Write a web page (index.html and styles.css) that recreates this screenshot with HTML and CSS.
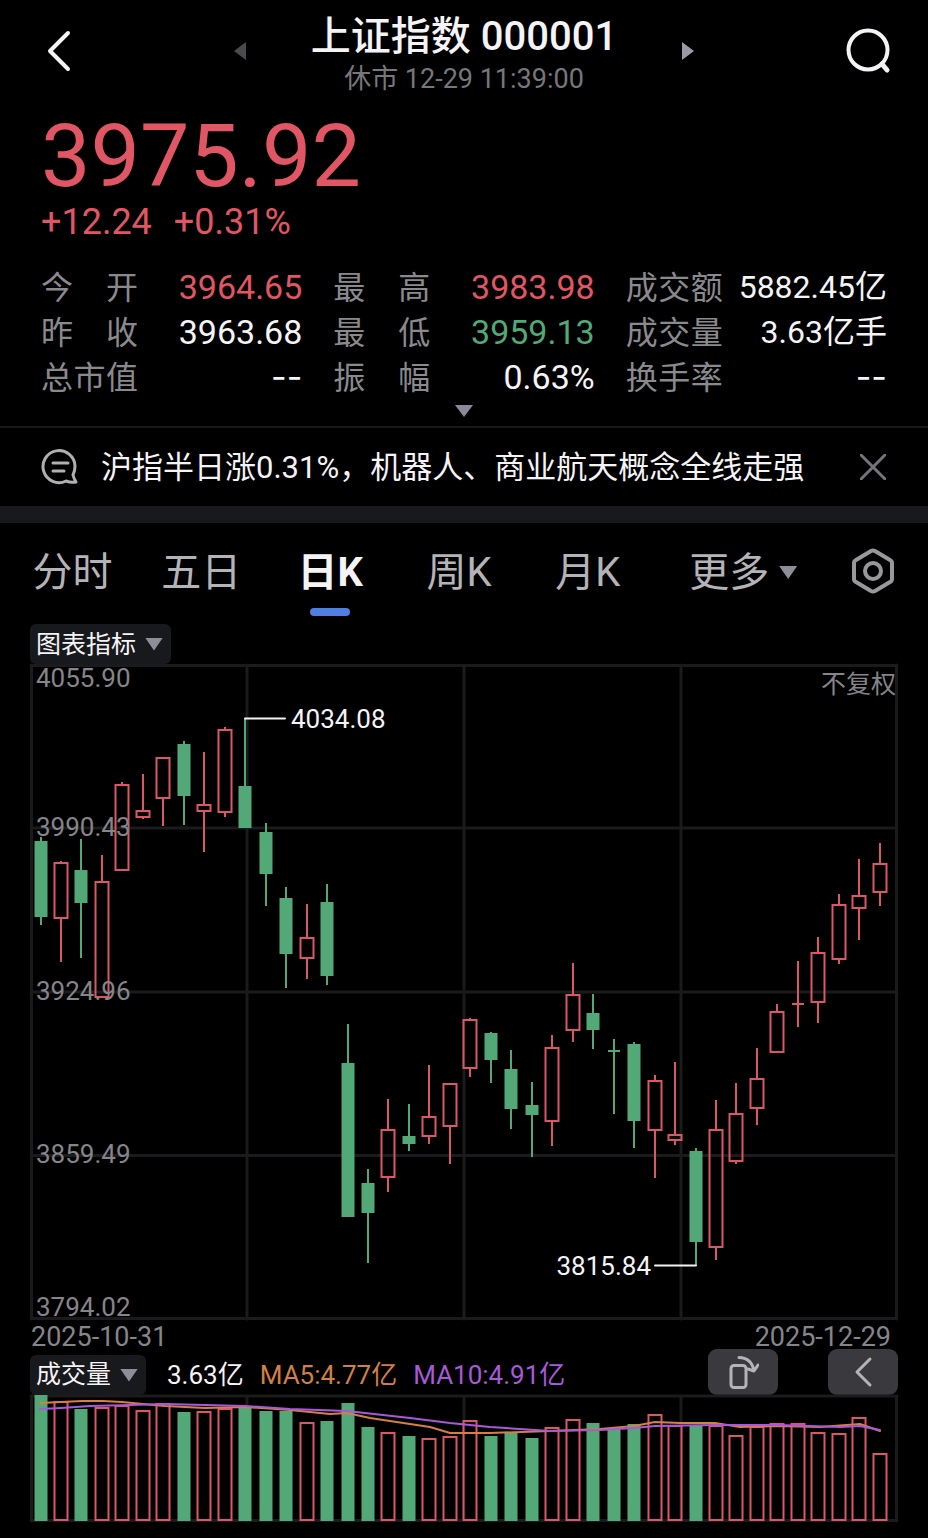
FILE: index.html
```
<!DOCTYPE html>
<html lang="zh-CN">

<head>
    <meta charset="utf-8" />
    <meta name="viewport" content="width=device-width, initial-scale=1">
    <title>上证指数 000001</title>
    <link rel="stylesheet" href="styles.css">
</head>

<body>
    <header class="topbar">
        <button class="icon-btn back" aria-label="返回">
            <svg width="26" height="42" viewBox="0 0 26 42"><path d="M22 3 4 21l18 18" /></svg>
        </button>
        <div class="heading">
            <button class="icon-btn prev" aria-label="上一个">
                <svg width="12" height="18" viewBox="0 0 12 18"><path d="M12 0v18L0 9z" /></svg>
            </button>
            <div class="name">
                <h1>上证指数 000001</h1>
                <p>休市 12-29 11:39:00</p>
            </div>
            <button class="icon-btn next" aria-label="下一个">
                <svg width="12" height="18" viewBox="0 0 12 18"><path d="M0 0v18l12-9z" /></svg>
            </button>
        </div>
        <button class="icon-btn search" aria-label="搜索">
            <svg width="46" height="46" viewBox="0 0 46 46">
                <circle cx="22" cy="22" r="19.5" />
                <path d="m36 36 5 6" stroke-width="5" />
            </svg>
        </button>
    </header>

    <section class="quote">
        <div class="price">3975.92</div>
        <div class="change"><span>+12.24</span><span>+0.31%</span></div>
        <div class="stats">
            <dl>
                <dt>今 开</dt><dd class="up">3964.65</dd>
                <dt>昨 收</dt><dd>3963.68</dd>
                <dt>总市值</dt><dd class="none">--</dd>
            </dl>
            <dl>
                <dt>最 高</dt><dd class="up">3983.98</dd>
                <dt>最 低</dt><dd class="down">3959.13</dd>
                <dt>振 幅</dt><dd>0.63%</dd>
            </dl>
            <dl>
                <dt>成交额</dt><dd class="unit">5882.45亿</dd>
                <dt>成交量</dt><dd class="unit">3.63亿手</dd>
                <dt>换手率</dt><dd class="none">--</dd>
            </dl>
        </div>
        <button class="icon-btn unfold" aria-label="展开">
            <svg width="18" height="12" viewBox="0 0 18 12"><path d="M0 0h18L9 12z" /></svg>
        </button>
    </section>

    <section class="news">
        <svg class="news-icon" width="38" height="38" viewBox="0 0 38 38">
            <path d="M34 18A16 16 0 1 0 25 33q5 2 10 1-2-3-3-7 2-4 2-9z" />
            <path d="M12 15h15M12 23h11" />
        </svg>
        <a href="#">沪指半日涨0.31%，机器人、商业航天概念全线走强</a>
        <button class="icon-btn close" aria-label="关闭">
            <svg width="26" height="26" viewBox="0 0 26 26"><path d="m1 1 24 24M25 1 1 25" /></svg>
        </button>
    </section>

    <nav class="tabs">
        <button>分时</button>
        <button>五日</button>
        <button class="active">日K</button>
        <button>周K</button>
        <button>月K</button>
        <button>更多<i class="caret"></i></button>
        <button class="setting" aria-label="设置">
            <svg width="44" height="46" viewBox="0 0 44 46">
                <path d="M20 3q2-1 4 0l15 9q2 1 2 3v16q0 2-2 3l-15 9q-2 1-4 0L5 34q-2-1-2-3V15q0-2 2-3z" />
                <circle cx="22" cy="23" r="8" />
            </svg>
        </button>
    </nav>

    <main class="charts">
        <label class="chip">
            <select aria-label="图表指标">
                <option>图表指标</option>
            </select>
            <i class="caret"></i>
        </label>
        <svg id="kline" class="plot" viewBox="30 664 868 656">
            <g class="grid">
                <path d="M31 665.5h866M31 828h866M31 992h866M31 1155.5h866M31 1318.5h866" />
                <path d="M31.5 665v654M247 665v654M464 665v654M681 665v654M896.5 665v654" />
            </g>
            <g class="candles"></g>
            <g class="scale">
                <text x="36" y="687">4055.90</text>
                <text x="36" y="836">3990.43</text>
                <text x="36" y="1000">3924.96</text>
                <text x="36" y="1163">3859.49</text>
                <text x="36" y="1316">3794.02</text>
                <text x="896" y="693" class="right">不复权</text>
            </g>
            <g class="mark">
                <path d="M245 718.5h40M655 1265.5h41" />
                <text x="291" y="728">4034.08</text>
                <text x="651" y="1275" class="right">3815.84</text>
            </g>
        </svg>
        <div class="dates"><span>2025-10-31</span><span>2025-12-29</span></div>
        <div class="legend">
            <label class="chip">
                <select aria-label="成交量">
                    <option>成交量</option>
                </select>
                <i class="caret"></i>
            </label>
            <span>3.63亿</span>
            <span class="ma5">MA5:4.77亿</span>
            <span class="ma10">MA10:4.91亿</span>
            <div class="tools">
                <button aria-label="横屏">
                    <svg width="32" height="36" viewBox="0 0 32 36">
                        <rect x="4" y="11.5" width="15" height="22" rx="3" />
                        <path d="M12 3.500q12 0 15 13M21 15l6 2 4-6" />
                    </svg>
                </button>
                <button aria-label="收起">
                    <svg width="20" height="32" viewBox="0 0 20 32"><path d="M17 3 4 16l13 13" /></svg>
                </button>
            </div>
        </div>
        <svg id="volume" class="plot" viewBox="30 1395 868 127">
            <g class="grid">
                <path d="M31 1396h866M31 1520.5h866" />
                <path d="M31.5 1396v125M247 1396v125M464 1396v125M681 1396v125M896.5 1396v125" />
            </g>
            <g class="bars"></g>
            <polyline class="ma5" points="40,1403 61,1402 82,1401 103,1401 122,1402 143,1404 165,1406 205,1408 245,1407 290,1410 330,1414 347,1413 370,1418 430,1427 450,1433 490,1433 550,1431 600,1429 634,1426 655,1422 680,1423 715,1423 740,1427 778,1426 820,1427 860,1424 880,1431" />
            <polyline class="ma10" points="40,1409 61,1408 90,1406 130,1405 165,1404 205,1405 245,1406 290,1409 347,1411 410,1418 450,1423 490,1427 550,1431 600,1430 634,1428 655,1426 715,1425 778,1425 840,1427 860,1426 880,1430" />
        </svg>
    </main>
    <script src="chart.js"></script>
</body>

</html>
```

FILE: styles.css
```
* {
    box-sizing: border-box;
    margin: 0;
    padding: 0;
}

body {
    background: #000;
    color: #f4f4f6;
    font-family: Roboto, "Noto Sans CJK SC", sans-serif;
    font-size: 26px;
    line-height: 1;
}

button,
select {
    border: 0;
    background: none;
    color: inherit;
    font: inherit;
    cursor: pointer;
}

svg {
    display: block;
    fill: none;
    stroke-linecap: round;
    stroke-linejoin: round;
}

.up {
    color: #e15665;
}

.down {
    color: #52a977;
}

.caret {
    width: 18px;
    height: 13px;
    background: #8e8e98;
    clip-path: polygon(0 0, 100% 0, 50% 100%);
}

/* top bar */

.topbar {
    display: flex;
    align-items: center;
    justify-content: space-between;
    height: 102px;
    padding: 0 36px 0 46px;
}

.back svg {
    stroke: #f4f4f6;
    stroke-width: 4;
}

.search svg {
    stroke: #f4f4f6;
    stroke-width: 4;
}

.heading {
    display: flex;
    align-items: center;
    justify-content: space-between;
    width: 460px;
    margin-left: 10px;
}

.name {
    padding-top: 6px;
    text-align: center;
}

.name h1 {
    font-size: 40px;
    font-weight: 500;
    line-height: 50px;
}

.name p {
    color: #77777b;
    font-size: 27px;
    line-height: 34px;
}

.prev svg {
    fill: #4a4a4c;
}

.next svg {
    fill: #9a9aa4;
}

/* quote */

.quote {
    padding: 10px 41px 0;
    border-bottom: 2px solid #18181a;
}

.price {
    color: #e15665;
    font-size: 88px;
    line-height: 88px;
}

.change {
    display: flex;
    gap: 22px;
    color: #e15665;
    font-size: 36px;
    line-height: 44px;
}

.stats {
    display: grid;
    grid-template-columns: repeat(3, 1fr);
    gap: 31px;
    margin-top: 20px;
}

.stats dl {
    display: grid;
    grid-template-columns: 97px 1fr;
    line-height: 46px;
}

.stats dt {
    height: 45px;
    color: #8a8a8e;
    font-size: 32px;
    line-height: 48px;
    text-align-last: justify;
}

.stats dd {
    height: 45px;
    font-size: 34px;
    text-align: right;
    white-space: nowrap;
}

.stats .unit {
    font-size: 32px;
}

.stats .none {
    font-family: Inter, sans-serif;
}

.unfold {
    display: block;
    margin: 6px auto 9px;
}

.unfold svg {
    fill: #8a8a98;
}

/* news */

.news {
    display: flex;
    align-items: center;
    height: 95px;
    padding: 0 42px 0 41px;
    border-bottom: 17px solid #18191d;
}

.news a {
    flex: 1;
    margin-left: 22px;
    color: inherit;
    font-size: 31px;
    text-decoration: none;
    white-space: nowrap;
}

.news-icon {
    stroke: #b0b0b2;
    stroke-width: 3;
}

.close svg {
    stroke: #74747c;
    stroke-width: 3;
}

/* tabs */

.tabs {
    display: grid;
    grid-template-columns: repeat(5, 129fr) 182fr 78fr;
    height: 101px;
    padding: 0 16px 0 8px;
    color: #b4b4b8;
}

.tabs button {
    display: flex;
    position: relative;
    align-items: center;
    justify-content: center;
    gap: 10px;
    height: 96px;
    padding-top: 3px;
    font-size: 40px;
}

.tabs .active {
    color: #f4f4f6;
    font-weight: 700;
}

.tabs .active::after {
    content: "";
    position: absolute;
    bottom: 3px;
    width: 40px;
    height: 8px;
    border-radius: 4px;
    background: #4f80e1;
}

.tabs .setting {
    padding-top: 0;
}

.setting svg {
    stroke: #98989c;
    stroke-width: 4;
}

/* charts */

.charts {
    padding: 0 30px 16px;
}

.chip {
    display: inline-flex;
    align-items: center;
    height: 40px;
    padding: 0 8px 0 6px;
    border-radius: 6px;
    background: #18191d;
    vertical-align: top;
}

.chip select {
    height: 40px;
    padding-right: 8px;
    font-size: 25px;
    appearance: none;
    outline: none;
}

.chip .caret {
    pointer-events: none;
}

.plot {
    width: 100%;
    overflow: visible;
}

.grid {
    stroke: #1b1b1d;
    stroke-width: 3;
}

.rise,
.fall {
    stroke: #d95766;
    stroke-width: 2;
    stroke-linecap: butt;
    stroke-linejoin: miter;
}

.fall {
    fill: #52a977;
    stroke: #52a977;
}

.scale {
    fill: #85858a;
    font-size: 26px;
}

.scale .right {
    font-size: 25px;
}

.right {
    text-anchor: end;
}

.mark text {
    fill: #f4f4f6;
    font-size: 26px;
}

.mark path {
    stroke: #f4f4f6;
    stroke-width: 2;
}

.dates {
    display: flex;
    justify-content: space-between;
    padding: 0 7px 0 1px;
    color: #85858a;
    font-size: 27px;
    line-height: 35px;
}

.legend {
    display: flex;
    align-items: flex-end;
    gap: 16px;
    height: 40px;
    line-height: 40px;
    white-space: nowrap;
}

.legend .chip {
    margin-right: 5px;
}

.legend .ma5 {
    color: #d37f45;
}

.legend .ma10 {
    color: #a858d8;
}

.tools {
    display: flex;
    gap: 50px;
    margin-left: auto;
}

.tools button {
    display: flex;
    align-items: center;
    justify-content: center;
    width: 70px;
    height: 46px;
    border-radius: 9px;
    background: #3a3a3e;
}

.tools svg {
    stroke: #b4b4b8;
    stroke-width: 3;
}

polyline {
    stroke-width: 2;
}

polyline.ma5 {
    stroke: #d37f45;
}

polyline.ma10 {
    stroke: #a858d8;
}
```

FILE: chart.js
```
// one row per day: direction, high, body top, body bottom, low, volume top
var days = [
    ['fall', 837, 841, 917, 925, 1395],
    ['rise', 861, 862, 919, 962, 1401],
    ['fall', 839, 870, 903, 958, 1409],
    ['rise', 855, 881, 998, 998, 1407],
    ['rise', 782, 784, 871, 871, 1405],
    ['rise', 774, 810, 818, 819, 1410],
    ['rise', 757, 757, 799, 826, 1403],
    ['fall', 741, 744, 796, 825, 1412],
    ['rise', 752, 804, 812, 852, 1411],
    ['rise', 727, 729, 813, 817, 1408],
    ['fall', 718, 786, 828, 828, 1406],
    ['fall', 823, 832, 874, 906, 1411],
    ['fall', 887, 898, 954, 988, 1411],
    ['rise', 904, 937, 959, 979, 1422],
    ['fall', 884, 902, 976, 985, 1421],
    ['fall', 1024, 1063, 1217, 1217, 1403],
    ['fall', 1169, 1183, 1213, 1263, 1427],
    ['rise', 1099, 1129, 1178, 1192, 1432],
    ['fall', 1104, 1136, 1144, 1151, 1436],
    ['rise', 1065, 1116, 1137, 1144, 1438],
    ['rise', 1083, 1083, 1127, 1164, 1436],
    ['rise', 1018, 1019, 1069, 1077, 1420],
    ['fall', 1032, 1033, 1060, 1083, 1436],
    ['fall', 1050, 1069, 1109, 1129, 1432],
    ['fall', 1082, 1105, 1115, 1157, 1438],
    ['rise', 1035, 1047, 1122, 1146, 1427],
    ['rise', 963, 994, 1031, 1042, 1419],
    ['fall', 994, 1013, 1030, 1049, 1423],
    ['fall', 1039, 1051, 1052, 1114, 1428],
    ['fall', 1042, 1044, 1121, 1148, 1424],
    ['rise', 1075, 1080, 1131, 1178, 1414],
    ['rise', 1062, 1134, 1141, 1145, 1425],
    ['fall', 1148, 1151, 1242, 1265, 1425],
    ['rise', 1100, 1129, 1248, 1260, 1425],
    ['rise', 1083, 1113, 1162, 1164, 1435],
    ['rise', 1048, 1078, 1109, 1125, 1426],
    ['rise', 1004, 1011, 1053, 1053, 1423],
    ['rise', 961, 1004, 1004, 1027, 1423],
    ['rise', 937, 952, 1003, 1023, 1432],
    ['rise', 894, 904, 960, 964, 1433],
    ['rise', 859, 895, 909, 940, 1417],
    ['rise', 843, 863, 893, 906, 1453]
];

var FIRST = 40.5;
var STEP = 20.47;
var BOTTOM = 1520;

function box(x, top, bottom, type) {
    var half = type === 'rise' ? 6.5 : 5.5;
    // flat days are drawn as a single dash
    if (bottom - top < 2) {
        return 'M' + (x - 6) + ' ' + top + 'h12';
    }
    // keep the stroke inside the body
    return 'M' + (x - half) + ' ' + (top + 1) + 'h' + half * 2 + 'V' + (bottom - 1) + 'h' + -half * 2 + 'z';
}

function draw(selector, type, d) {
    var path = document.createElementNS('http://www.w3.org/2000/svg', 'path');
    path.setAttribute('class', type);
    path.setAttribute('d', d);
    document.querySelector(selector).appendChild(path);
}

days.forEach(function (day, i) {
    var type = day[0];
    var x = Math.round(FIRST + i * STEP);
    var wicks = 'M' + x + ' ' + day[1] + 'V' + day[2] + 'M' + x + ' ' + day[3] + 'V' + day[4];
    draw('#kline .candles', type, wicks + box(x, day[2], day[3], type));
    draw('#volume .bars', type, box(x, day[5], BOTTOM + 1, type));
});
```
